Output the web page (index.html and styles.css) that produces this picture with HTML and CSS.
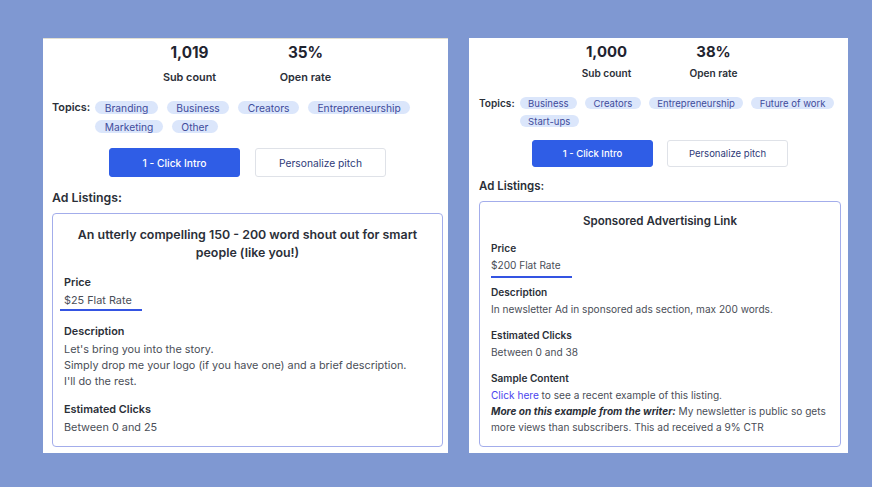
FILE: index.html
```html
<!DOCTYPE html>
<html lang="en">
<head>
<meta charset="utf-8">
<title>Newsletter listings</title>
<link rel="stylesheet" href="styles.css">
</head>
<body>
<main class="page">
  <section class="card card--a">
    <div class="stats">
      <div class="stat"><div class="stat-num">1,019</div><div class="stat-label">Sub count</div></div>
      <div class="stat"><div class="stat-num">35%</div><div class="stat-label">Open rate</div></div>
    </div>
    <div class="topics">
      <span class="topics-label">Topics:</span>
      <div class="tags">
        <span class="tag">Branding</span>
        <span class="tag">Business</span>
        <span class="tag">Creators</span>
        <span class="tag">Entrepreneurship</span>
        <span class="tag">Marketing</span>
        <span class="tag">Other</span>
      </div>
    </div>
    <div class="actions">
      <button class="btn btn-primary">1 - Click Intro</button>
      <button class="btn btn-secondary">Personalize pitch</button>
    </div>
    <h2 class="section-title">Ad Listings:</h2>
    <div class="listing">
      <h3 class="listing-title">An utterly compelling 150 - 200 word shout out for smart people (like you!)</h3>
      <div class="field field--price">
        <div class="field-label">Price</div>
        <div class="field-value">$25 Flat Rate</div>
        <div class="price-bar"></div>
      </div>
      <div class="field">
        <div class="field-label">Description</div>
        <div class="field-value">Let's bring you into the story.<br>Simply drop me your logo (if you have one) and a brief description.<br>I'll do the rest.</div>
      </div>
      <div class="field">
        <div class="field-label">Estimated Clicks</div>
        <div class="field-value">Between 0 and 25</div>
      </div>
    </div>
  </section>

  <section class="card card--b">
    <div class="stats">
      <div class="stat"><div class="stat-num">1,000</div><div class="stat-label">Sub count</div></div>
      <div class="stat"><div class="stat-num">38%</div><div class="stat-label">Open rate</div></div>
    </div>
    <div class="topics">
      <span class="topics-label">Topics:</span>
      <div class="tags">
        <span class="tag">Business</span>
        <span class="tag">Creators</span>
        <span class="tag">Entrepreneurship</span>
        <span class="tag">Future of work</span>
        <span class="tag">Start-ups</span>
      </div>
    </div>
    <div class="actions">
      <button class="btn btn-primary">1 - Click Intro</button>
      <button class="btn btn-secondary">Personalize pitch</button>
    </div>
    <h2 class="section-title">Ad Listings:</h2>
    <div class="listing">
      <h3 class="listing-title">Sponsored Advertising Link</h3>
      <div class="field field--price">
        <div class="field-label">Price</div>
        <div class="field-value">$200 Flat Rate</div>
        <div class="price-bar"></div>
      </div>
      <div class="field">
        <div class="field-label">Description</div>
        <div class="field-value">In newsletter Ad in sponsored ads section, max 200 words.</div>
      </div>
      <div class="field">
        <div class="field-label">Estimated Clicks</div>
        <div class="field-value">Between 0 and 38</div>
      </div>
      <div class="field">
        <div class="field-label">Sample Content</div>
        <div class="field-value"><a class="link" href="#">Click here</a> to see a recent example of this listing.<br><em class="writer-note">More on this example from the writer:</em> My newsletter is public so gets more views than subscribers. This ad received a 9% CTR</div>
      </div>
    </div>
  </section>
</main>
</body>
</html>
```
FILE: styles.css
```css
* { box-sizing: border-box; }

body {
  margin: 0;
  background: #7f98d2;
  font-family: Inter, "Noto Sans", sans-serif;
  color: #2b2f38;
}

.page {
  display: flex;
  align-items: flex-start;
  gap: 21px;
  padding: 38px 0 0 43px;
}

.card {
  background: #fff;
  height: 415px;
  display: flex;
  flex-direction: column;
  font-size: var(--base);
}

.card--a {
  --base: 10.85px;
  --num: 15.3px;
  --num-lh: 20px;
  --label-gap: 7px;
  --label-lh: 14px;
  --topics-gap: 17px;
  --tag-h: 13px;
  --tag-pad: 9.5px;
  --tag-gap: 9px;
  --actions-gap: 15px;
  --btn-w: 131px;
  --btn-h: 29px;
  --btn-gap: 15px;
  --sec-gap: 13px;
  --sec-lh: 16px;
  --listing-gap: 7px;
  --listing-pt: 12px;
  --title-lh: 18px;
  --field-gap: 12px;
  --value-gap: 2px;
  --bar-top: 1px;
  --bar-after: 0px;
  --bar-left: -4px;
  --bar-w: 82px;
  --stat-w: 116px;
  width: 405px;
  padding: 4px 5px 0 9px;
  border-top: 1px solid #e2dfd2;
}

.card--b {
  --base: 10.1px;
  --num: 14.9px;
  --num-lh: 19px;
  --label-gap: 5px;
  --label-lh: 13px;
  --topics-gap: 17px;
  --tag-h: 12px;
  --tag-pad: 8.5px;
  --tag-gap: 8px;
  --actions-gap: 13px;
  --btn-w: 121px;
  --btn-h: 27px;
  --btn-gap: 14px;
  --sec-gap: 12px;
  --sec-lh: 15px;
  --listing-gap: 7px;
  --listing-pt: 11px;
  --title-lh: 17px;
  --field-gap: 10px;
  --value-gap: 1px;
  --bar-top: 3px;
  --bar-after: -4px;
  --bar-left: 0px;
  --bar-w: 81px;
  --stat-w: 107px;
  width: 379px;
  padding: 5px 7px 0 10px;
}

/* stats */
.stats {
  display: flex;
  justify-content: center;
}
.stat {
  width: var(--stat-w);
  text-align: center;
}
.stat-num {
  font-size: var(--num);
  line-height: var(--num-lh);
  font-weight: 700;
  color: #1f2430;
}
.stat-label {
  margin-top: var(--label-gap);
  line-height: var(--label-lh);
  font-weight: 600;
  color: #2b2f38;
}

/* topics */
.topics {
  display: flex;
  align-items: flex-start;
  gap: 5px;
  margin-top: var(--topics-gap);
}
.topics-label {
  font-weight: 600;
  line-height: var(--tag-h);
  color: #2b2f38;
}
.tags {
  display: flex;
  flex-wrap: wrap;
  column-gap: var(--tag-gap);
  row-gap: 6px;
  flex: 1;
}
.tag {
  display: inline-flex;
  align-items: center;
  height: var(--tag-h);
  padding: 0 var(--tag-pad);
  border-radius: 999px;
  background: #dbe6fb;
  color: #3f4c9c;
  font-size: 0.945em;
}

/* actions */
.actions {
  display: flex;
  justify-content: center;
  gap: var(--btn-gap);
  margin-top: var(--actions-gap);
}
.btn {
  width: var(--btn-w);
  height: var(--btn-h);
  border-radius: 3px;
  font-family: inherit;
  font-size: 0.945em;
  cursor: pointer;
  padding: 0;
}
.btn-primary {
  background: #2f5de6;
  border: 1px solid #2f5de6;
  color: #fff;
  font-weight: 500;
}
.btn-secondary {
  background: #fff;
  border: 1px solid #dfe2e8;
  color: #2e3a78;
  font-weight: 400;
}

/* listings */
.section-title {
  margin: var(--sec-gap) 0 0;
  font-size: 1.135em;
  line-height: var(--sec-lh);
  font-weight: 600;
  color: #2b2f38;
}
.listing {
  margin-top: var(--listing-gap);
  border: 1px solid #a3adeb;
  border-radius: 4px;
  padding: var(--listing-pt) 11px 11px 11px;
}
.listing-title {
  margin: 0;
  text-align: center;
  font-size: 1.145em;
  line-height: var(--title-lh);
  font-weight: 600;
  color: #2b2f38;
}
.field {
  margin-top: var(--field-gap);
}
.field-label {
  font-weight: 600;
  line-height: 16px;
  color: #2b2f38;
}
.field-value {
  margin-top: var(--value-gap);
  line-height: 16px;
  color: #4a4e57;
}
.price-bar {
  width: var(--bar-w);
  height: 2px;
  margin-top: var(--bar-top);
  margin-bottom: var(--bar-after);
  margin-left: var(--bar-left);
  background: #3454e2;
}
.link {
  color: #4b45ee;
  text-decoration: none;
}
.writer-note {
  font-weight: 700;
  font-style: italic;
  color: #2b2f38;
}
```
